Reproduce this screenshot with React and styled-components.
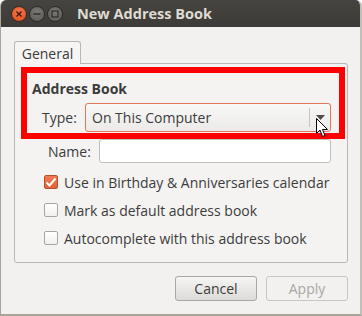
import React from "react";
import styled, { createGlobalStyle } from "styled-components";

const GlobalStyle = createGlobalStyle`
  html, body {
    margin: 0;
    padding: 0;
    background: #ffffff;
  }
  body {
    font-family: "Open Sans", "DejaVu Sans", sans-serif;
    font-size: 14px;
    color: #3c3c3c;
  }
`;

export default function App() {
  return (
    <>
      <GlobalStyle />
      <Window>
        <TitleBar>
          <WindowButtons>
            <CloseButton>
              <svg width="8" height="8" viewBox="0 0 8 8">
                <path d="M1.5 1.5 L6.5 6.5 M6.5 1.5 L1.5 6.5" stroke="#3a1608" strokeWidth="1.4" />
              </svg>
            </CloseButton>
            <GrayButton>
              <svg width="8" height="8" viewBox="0 0 8 8">
                <path d="M0.5 4 H7.5" stroke="#2f2e2b" strokeWidth="1.4" />
              </svg>
            </GrayButton>
            <GrayButton>
              <svg width="8" height="8" viewBox="0 0 8 8">
                <rect x="1" y="1" width="6" height="6" fill="none" stroke="#2f2e2b" strokeWidth="1.2" />
              </svg>
            </GrayButton>
          </WindowButtons>
          <Title>New Address Book</Title>
        </TitleBar>

        <Content>
          <Tabs>
            <Tab>General</Tab>
          </Tabs>
          <Panel>
            <Heading>Address Book</Heading>
            <FieldRow indent={27}>
              <Label>Type:</Label>
              <Combo>
                <ComboText>On This Computer</ComboText>
                <ComboSep />
                <ComboArrow>
                  <svg width="9" height="5" viewBox="0 0 9 5">
                    <path d="M0 0 H9 L4.5 5 Z" fill="#4c4c4c" />
                  </svg>
                </ComboArrow>
              </Combo>
            </FieldRow>
            <FieldRow indent={33} top={7}>
              <Label>Name:</Label>
              <Entry />
            </FieldRow>
            <Checks>
              <CheckRow>
                <CheckBox checked>
                  <svg width="12" height="11" viewBox="0 0 12 11">
                    <path d="M1.5 5.5 L4.5 8.5 L10.5 1.5" fill="none" stroke="#ffffff" strokeWidth="2" />
                  </svg>
                </CheckBox>
                Use in Birthday &amp; Anniversaries calendar
              </CheckRow>
              <CheckRow>
                <CheckBox />
                Mark as default address book
              </CheckRow>
              <CheckRow>
                <CheckBox />
                Autocomplete with this address book
              </CheckRow>
            </Checks>

            <Highlight />
            <Cursor>
              <svg width="13" height="20" viewBox="0 0 13 20">
                <path
                  d="M0.5 0.5 L0.5 15.5 L4 12 L6.5 18.5 L9 17.5 L6.5 11.5 L11.5 11.5 Z"
                  fill="#ffffff"
                  stroke="#000000"
                  strokeWidth="1"
                  strokeLinejoin="round"
                />
              </svg>
            </Cursor>
          </Panel>

          <ButtonRow>
            <Button>Cancel</Button>
            <Button disabled>Apply</Button>
          </ButtonRow>
        </Content>
      </Window>
    </>
  );
}

const Window = styled.div`
  width: 362px;
  height: 316px;
  box-sizing: border-box;
  background: #f2f1f0;
  border-left: 1px solid #a8a49c;
  border-right: 2px solid #c2bfba;
  border-bottom: 2px solid #a8a49c;
  border-radius: 6px 6px 0 0;
  overflow: hidden;
  display: flex;
  flex-direction: column;
`;

const TitleBar = styled.div`
  height: 27px;
  flex-shrink: 0;
  background: linear-gradient(#45443f, #3c3b37);
  display: flex;
  align-items: center;
  padding-left: 10px;
`;

const WindowButtons = styled.div`
  display: flex;
  gap: 2px;
  margin-right: 14px;
`;

const RoundButton = styled.div`
  width: 16px;
  height: 16px;
  border-radius: 50%;
  display: flex;
  align-items: center;
  justify-content: center;
  box-sizing: border-box;
`;

const CloseButton = styled(RoundButton)`
  background: radial-gradient(circle at 50% 35%, #f3774d, #df4a1c);
  border: 1px solid #3a2a20;
`;

const GrayButton = styled(RoundButton)`
  background: radial-gradient(circle at 50% 35%, #7a7873, #5a5955);
  border: 1px solid #2e2d2a;
`;

const Title = styled.div`
  font-family: "Open Sans", "DejaVu Sans", sans-serif;
  font-weight: 700;
  font-size: 14.5px;
  color: #dfdbd2;
  margin-top: -1px;
`;

const Content = styled.div`
  padding: 14px 13px 0 13px;
  display: flex;
  flex-direction: column;
`;

const Tabs = styled.div`
  display: flex;
`;

const Tab = styled.div`
  width: 67px;
  height: 23px;
  box-sizing: border-box;
  border: 1px solid #bab7b2;
  border-bottom: none;
  border-radius: 3px 3px 0 0;
  background: #f6f5f4;
  display: flex;
  align-items: center;
  justify-content: center;
  margin-bottom: -1px;
  position: relative;
  z-index: 1;
`;

const Panel = styled.div`
  position: relative;
  width: 334px;
  height: 200px;
  box-sizing: border-box;
  border: 1px solid #bab7b2;
  border-radius: 0 3px 3px 3px;
  background: #f4f3f2;
  padding-top: 15px;
`;

const Heading = styled.div`
  font-weight: 700;
  line-height: 19px;
  padding-left: 17px;
  height: 19px;
`;

const FieldRow = styled.div`
  display: flex;
  align-items: center;
  padding-left: ${(p) => p.indent}px;
  margin-top: ${(p) => p.top || 5}px;
`;

const Label = styled.div`
  margin-right: 8px;
`;

const Combo = styled.div`
  width: 246px;
  height: 29px;
  box-sizing: border-box;
  margin-left: auto;
  margin-right: 16px;
  border: 1px solid #e2795a;
  border-radius: 3px;
  background: linear-gradient(#f8f8f7, #ebeae8);
  display: flex;
  align-items: center;
`;

const ComboText = styled.div`
  flex: 1;
  padding-left: 6px;
`;

const ComboSep = styled.div`
  width: 1px;
  height: 19px;
  background: #c9c6c1;
`;

const ComboArrow = styled.div`
  width: 20px;
  display: flex;
  justify-content: center;
`;

const Entry = styled.div`
  width: 234px;
  height: 24px;
  box-sizing: border-box;
  margin-left: auto;
  margin-right: 16px;
  border: 1px solid #c3c0bb;
  border-radius: 3px;
  background: #ffffff;
`;

const Checks = styled.div`
  margin-top: 5px;
  padding-left: 29px;
  display: flex;
  flex-direction: column;
`;

const CheckRow = styled.div`
  height: 28px;
  display: flex;
  align-items: center;
  white-space: nowrap;
`;

const CheckBox = styled.div`
  width: 14px;
  height: 14px;
  box-sizing: border-box;
  margin-right: 6px;
  border-radius: 2px;
  border: 1px solid ${(p) => (p.checked ? "#b5502e" : "#a9a6a1")};
  background: ${(p) => (p.checked ? "linear-gradient(#ef7b52, #e0643a)" : "linear-gradient(#ffffff, #f1f0ee)")};
  display: flex;
  align-items: center;
  justify-content: center;
`;

const Highlight = styled.div`
  position: absolute;
  left: 6px;
  top: 3px;
  width: 324px;
  height: 72px;
  box-sizing: border-box;
  border: 6px solid #ff0000;
  pointer-events: none;
`;

const Cursor = styled.div`
  position: absolute;
  left: 301px;
  top: 54px;
  line-height: 0;
`;

const ButtonRow = styled.div`
  display: flex;
  justify-content: flex-end;
  gap: 9px;
  margin-top: 13px;
  width: 334px;
`;

const Button = styled.div`
  width: 82px;
  height: 25px;
  box-sizing: border-box;
  border-radius: 3px;
  display: flex;
  align-items: center;
  justify-content: center;
  border: 1px solid ${(p) => (p.disabled ? "#c9c7c3" : "#a9a7a3")};
  background: ${(p) => (p.disabled ? "#f2f1f0" : "linear-gradient(#f5f5f4, #dddbd8)")};
  color: ${(p) => (p.disabled ? "#a9a7a3" : "#3c3c3c")};
`;
